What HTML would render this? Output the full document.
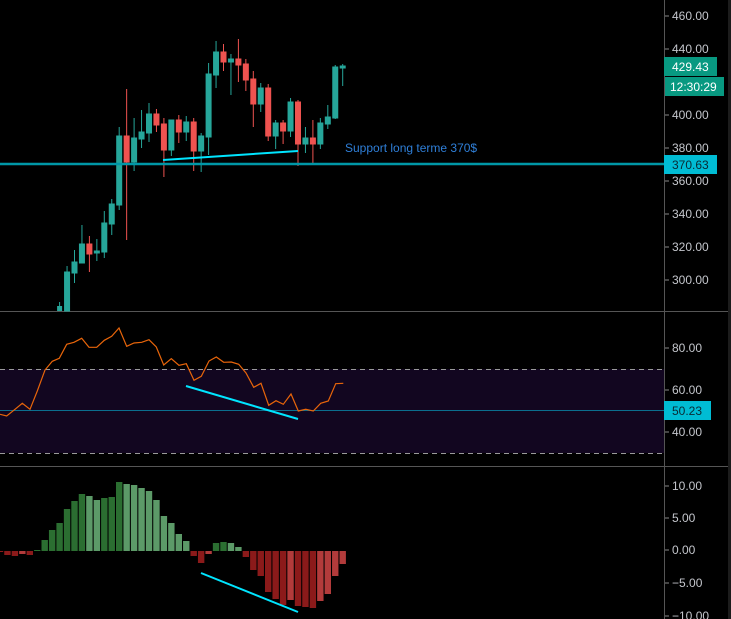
<!DOCTYPE html>
<html><head><meta charset="utf-8"><style>
html,body{margin:0;padding:0;background:#000;width:731px;height:619px;overflow:hidden}
svg{display:block}
text{font-family:"Liberation Sans",sans-serif;font-size:12px}
</style></head><body>
<svg width="731" height="619" viewBox="0 0 731 619" xmlns="http://www.w3.org/2000/svg">
<rect width="731" height="619" fill="#000"/>
<rect x="728" y="0" width="3" height="619" fill="#1c1c1c"/>
<!-- RSI band -->
<rect x="0" y="369" width="664" height="84" fill="#120620"/>
<line x1="0" y1="369.5" x2="664" y2="369.5" stroke="#9a9a9a" stroke-dasharray="5,4"/>
<line x1="0" y1="453.5" x2="664" y2="453.5" stroke="#9a9a9a" stroke-dasharray="5,4"/>
<line x1="0" y1="410.5" x2="664" y2="410.5" stroke="#0b6e8e"/>
<!-- separators & axis -->
<line x1="0" y1="311.5" x2="728" y2="311.5" stroke="#555"/>
<line x1="0" y1="466.5" x2="728" y2="466.5" stroke="#555"/>
<line x1="664.5" y1="0" x2="664.5" y2="619" stroke="#555"/>
<!-- candles -->
<g stroke-width="1">
<line x1="59.6" y1="302" x2="59.6" y2="311" stroke="#26a69a"/>
<rect x="57.1" y="306" width="5" height="5" fill="#26a69a"/>
<g stroke="#26a69a" fill="#26a69a">
<line x1="67.05" y1="266" x2="67.05" y2="311"/><rect x="64.55" y="272" width="5" height="39"/>
<line x1="74.5" y1="250" x2="74.5" y2="283"/><rect x="72" y="262" width="5" height="11"/>
<line x1="81.95" y1="225" x2="81.95" y2="263"/><rect x="79.45" y="244" width="5" height="19"/>
<line x1="96.85" y1="239" x2="96.85" y2="261"/><rect x="94.35" y="251" width="5" height="2"/>
<line x1="104.3" y1="211" x2="104.3" y2="258"/><rect x="101.8" y="223" width="5" height="29"/>
<line x1="111.75" y1="199" x2="111.75" y2="235"/><rect x="109.25" y="204" width="5" height="20"/>
<line x1="119.2" y1="127" x2="119.2" y2="210"/><rect x="116.7" y="136" width="5" height="69"/>
<line x1="134.1" y1="118" x2="134.1" y2="171"/><rect x="131.6" y="138" width="5" height="24"/>
<line x1="141.55" y1="110" x2="141.55" y2="148"/><rect x="139.05" y="132" width="5" height="7"/>
<line x1="149" y1="103" x2="149" y2="142"/><rect x="146.5" y="114" width="5" height="19"/>
<line x1="171.35" y1="120" x2="171.35" y2="156"/><rect x="168.85" y="120" width="5" height="30"/>
<line x1="186.25" y1="116" x2="186.25" y2="141"/><rect x="183.75" y="122" width="5" height="10"/>
<line x1="201.15" y1="133" x2="201.15" y2="172"/><rect x="198.65" y="136" width="5" height="15"/>
<line x1="208.6" y1="63" x2="208.6" y2="155"/><rect x="206.1" y="74" width="5" height="63"/>
<line x1="216.05" y1="41" x2="216.05" y2="88"/><rect x="213.55" y="52" width="5" height="23"/>
<line x1="230.95" y1="54" x2="230.95" y2="95"/><rect x="228.45" y="59" width="5" height="3"/>
<line x1="260.75" y1="83" x2="260.75" y2="112"/><rect x="258.25" y="88" width="5" height="16"/>
<line x1="275.65" y1="120" x2="275.65" y2="149"/><rect x="273.15" y="123" width="5" height="13"/>
<line x1="290.55" y1="98" x2="290.55" y2="137"/><rect x="288.05" y="102" width="5" height="29"/>
<line x1="305.45" y1="127" x2="305.45" y2="153"/><rect x="302.95" y="138" width="5" height="6"/>
<line x1="320.35" y1="118" x2="320.35" y2="149"/><rect x="317.85" y="123" width="5" height="21"/>
<line x1="327.8" y1="105" x2="327.8" y2="129"/><rect x="325.3" y="117" width="5" height="7"/>
<line x1="335.25" y1="65" x2="335.25" y2="119"/><rect x="332.75" y="67" width="5" height="51"/>
<line x1="342.7" y1="64" x2="342.7" y2="86"/><rect x="340.2" y="66" width="5" height="2"/>
</g>
<g stroke="#ef5350" fill="#ef5350">
<line x1="89.4" y1="236" x2="89.4" y2="272"/><rect x="86.9" y="244" width="5" height="10"/>
<line x1="126.65" y1="89" x2="126.65" y2="240"/><rect x="124.15" y="136" width="5" height="26"/>
<line x1="156.45" y1="109" x2="156.45" y2="132"/><rect x="153.95" y="114" width="5" height="11"/>
<line x1="163.9" y1="118" x2="163.9" y2="177"/><rect x="161.4" y="124" width="5" height="26"/>
<line x1="178.8" y1="115" x2="178.8" y2="143"/><rect x="176.3" y="120" width="5" height="12"/>
<line x1="193.7" y1="118" x2="193.7" y2="171"/><rect x="191.2" y="122" width="5" height="29"/>
<line x1="223.5" y1="44" x2="223.5" y2="71"/><rect x="221" y="52" width="5" height="10"/>
<line x1="238.4" y1="39" x2="238.4" y2="82"/><rect x="235.9" y="59" width="5" height="6"/>
<line x1="245.85" y1="59" x2="245.85" y2="91"/><rect x="243.35" y="64" width="5" height="16"/>
<line x1="253.3" y1="71" x2="253.3" y2="127"/><rect x="250.8" y="79" width="5" height="25"/>
<line x1="268.2" y1="84" x2="268.2" y2="141"/><rect x="265.7" y="88" width="5" height="48"/>
<line x1="283.1" y1="120" x2="283.1" y2="144"/><rect x="280.6" y="123" width="5" height="8"/>
<line x1="298" y1="100" x2="298" y2="166"/><rect x="295.5" y="102" width="5" height="42"/>
<line x1="312.9" y1="120" x2="312.9" y2="163"/><rect x="310.4" y="138" width="5" height="6"/>
</g>
</g>
<line x1="0" y1="164" x2="664" y2="164" stroke="#0097a7" stroke-width="2.5"/>
<line x1="163" y1="160" x2="298" y2="151" stroke="#00e5ff" stroke-width="2"/>
<text x="345" y="152" fill="#2f7fd8" font-size="13">Support long terme 370$</text>
<!-- RSI line -->
<polyline fill="none" stroke="#e8650a" stroke-width="1.2" points="0,414.3 6.7,416 15,409.3 22.3,403.3 30,409.3 37.3,391 45,370 52.3,361.3 59.3,358.3 66.7,344.3 74,342.3 81.7,338.3 89,347.3 96.7,347.3 104.3,340.3 111.7,336.3 119,328 126.7,346.3 134,343 141.7,342.3 149,339.7 156.3,347 163.7,365 171.3,358.7 179,365.3 186.3,363.7 194,380.3 201.3,376.3 209,361 216.3,357 223.7,362.3 231.3,362 238.7,364.3 246,373 253.7,387.3 261,383.3 268.7,405.3 276,400.7 283.3,404.3 291,394 298.3,411 305.7,409.3 313.3,411 320.7,403.3 328.3,401 335.7,383.7 343.3,383.3"/>
<line x1="186" y1="386" x2="298" y2="419" stroke="#00e5ff" stroke-width="2"/>
<!-- MACD bars -->
<g>
<rect x="-3.2" y="551" width="6.4" height="1" fill="#8b1a1a"/>
<rect x="4.25" y="551" width="6.4" height="4" fill="#8b1a1a"/>
<rect x="11.7" y="551" width="6.4" height="5" fill="#8b1a1a"/>
<rect x="19.15" y="551" width="6.4" height="3" fill="#b23b3b"/>
<rect x="26.6" y="551" width="6.4" height="4" fill="#8b1a1a"/>
<rect x="34.05" y="550" width="6.4" height="1" fill="#2b6e31"/>
<rect x="41.5" y="540" width="6.4" height="11" fill="#2b6e31"/>
<rect x="48.95" y="530" width="6.4" height="21" fill="#2b6e31"/>
<rect x="56.4" y="523" width="6.4" height="28" fill="#2b6e31"/>
<rect x="63.85" y="509" width="6.4" height="42" fill="#2b6e31"/>
<rect x="71.3" y="501" width="6.4" height="50" fill="#2b6e31"/>
<rect x="78.75" y="494" width="6.4" height="57" fill="#2b6e31"/>
<rect x="86.2" y="496" width="6.4" height="55" fill="#5c9a68"/>
<rect x="93.65" y="500" width="6.4" height="51" fill="#5c9a68"/>
<rect x="101.1" y="498" width="6.4" height="53" fill="#2b6e31"/>
<rect x="108.55" y="497" width="6.4" height="54" fill="#2b6e31"/>
<rect x="116" y="482" width="6.4" height="69" fill="#2b6e31"/>
<rect x="123.45" y="484" width="6.4" height="67" fill="#5c9a68"/>
<rect x="130.9" y="485" width="6.4" height="66" fill="#5c9a68"/>
<rect x="138.35" y="488" width="6.4" height="63" fill="#5c9a68"/>
<rect x="145.8" y="491" width="6.4" height="60" fill="#5c9a68"/>
<rect x="153.25" y="500" width="6.4" height="51" fill="#5c9a68"/>
<rect x="160.7" y="516" width="6.4" height="35" fill="#5c9a68"/>
<rect x="168.15" y="523" width="6.4" height="28" fill="#5c9a68"/>
<rect x="175.6" y="534" width="6.4" height="17" fill="#5c9a68"/>
<rect x="183.05" y="541" width="6.4" height="10" fill="#5c9a68"/>
<rect x="190.5" y="551" width="6.4" height="5" fill="#8b1a1a"/>
<rect x="197.95" y="551" width="6.4" height="12" fill="#8b1a1a"/>
<rect x="205.4" y="551" width="6.4" height="3" fill="#b23b3b"/>
<rect x="212.85" y="543" width="6.4" height="8" fill="#2b6e31"/>
<rect x="220.3" y="542" width="6.4" height="9" fill="#2b6e31"/>
<rect x="227.75" y="543" width="6.4" height="8" fill="#5c9a68"/>
<rect x="235.2" y="547" width="6.4" height="4" fill="#5c9a68"/>
<rect x="242.65" y="551" width="6.4" height="6" fill="#8b1a1a"/>
<rect x="250.1" y="551" width="6.4" height="19" fill="#8b1a1a"/>
<rect x="257.55" y="551" width="6.4" height="25" fill="#8b1a1a"/>
<rect x="265" y="551" width="6.4" height="41" fill="#8b1a1a"/>
<rect x="272.45" y="551" width="6.4" height="48" fill="#8b1a1a"/>
<rect x="279.9" y="551" width="6.4" height="54" fill="#8b1a1a"/>
<rect x="287.35" y="551" width="6.4" height="49" fill="#b23b3b"/>
<rect x="294.8" y="551" width="6.4" height="55" fill="#8b1a1a"/>
<rect x="302.25" y="551" width="6.4" height="56" fill="#8b1a1a"/>
<rect x="309.7" y="551" width="6.4" height="57" fill="#8b1a1a"/>
<rect x="317.15" y="551" width="6.4" height="50" fill="#b23b3b"/>
<rect x="324.6" y="551" width="6.4" height="43" fill="#b23b3b"/>
<rect x="332.05" y="551" width="6.4" height="25" fill="#b23b3b"/>
<rect x="339.5" y="551" width="6.4" height="13" fill="#b23b3b"/>
</g>
<line x1="201" y1="573" x2="298" y2="612" stroke="#00e5ff" stroke-width="2"/>
<!-- axis ticks & labels -->
<g stroke="#888">
<line x1="665" y1="16" x2="669" y2="16"/><line x1="665" y1="49" x2="669" y2="49"/>
<line x1="665" y1="115" x2="669" y2="115"/><line x1="665" y1="148" x2="669" y2="148"/>
<line x1="665" y1="181" x2="669" y2="181"/><line x1="665" y1="214" x2="669" y2="214"/>
<line x1="665" y1="247" x2="669" y2="247"/><line x1="665" y1="280" x2="669" y2="280"/>
<line x1="665" y1="348" x2="669" y2="348"/><line x1="665" y1="390" x2="669" y2="390"/>
<line x1="665" y1="432" x2="669" y2="432"/><line x1="665" y1="486" x2="669" y2="486"/>
<line x1="665" y1="518" x2="669" y2="518"/><line x1="665" y1="550" x2="669" y2="550"/>
<line x1="665" y1="583" x2="669" y2="583"/><line x1="665" y1="616" x2="669" y2="616"/>
</g>
<g fill="#c4c6cc">
<text x="672" y="20">460.00</text><text x="672" y="53">440.00</text>
<text x="672" y="119">400.00</text><text x="672" y="152">380.00</text>
<text x="672" y="185">360.00</text><text x="672" y="218">340.00</text>
<text x="672" y="251">320.00</text><text x="672" y="284">300.00</text>
<text x="672" y="352">80.00</text><text x="672" y="394">60.00</text>
<text x="672" y="436">40.00</text><text x="672" y="490">10.00</text>
<text x="672" y="522">5.00</text><text x="672" y="554">0.00</text>
<text x="672" y="587">−5.00</text><text x="672" y="620">−10.00</text>
</g>
<rect x="664" y="57" width="53" height="19" fill="#089981"/>
<text x="672" y="71" fill="#fff">429.43</text>
<rect x="665" y="77" width="59" height="19" fill="#089981"/>
<text x="670" y="91" fill="#fff">12:30:29</text>
<rect x="664" y="155" width="53" height="19" fill="#00bcd4"/>
<text x="672" y="169" fill="#0a2a33">370.63</text>
<rect x="664" y="401" width="47" height="19" fill="#00bcd4"/>
<text x="672" y="415" fill="#0a2a33">50.23</text>
</svg>
</body></html>
